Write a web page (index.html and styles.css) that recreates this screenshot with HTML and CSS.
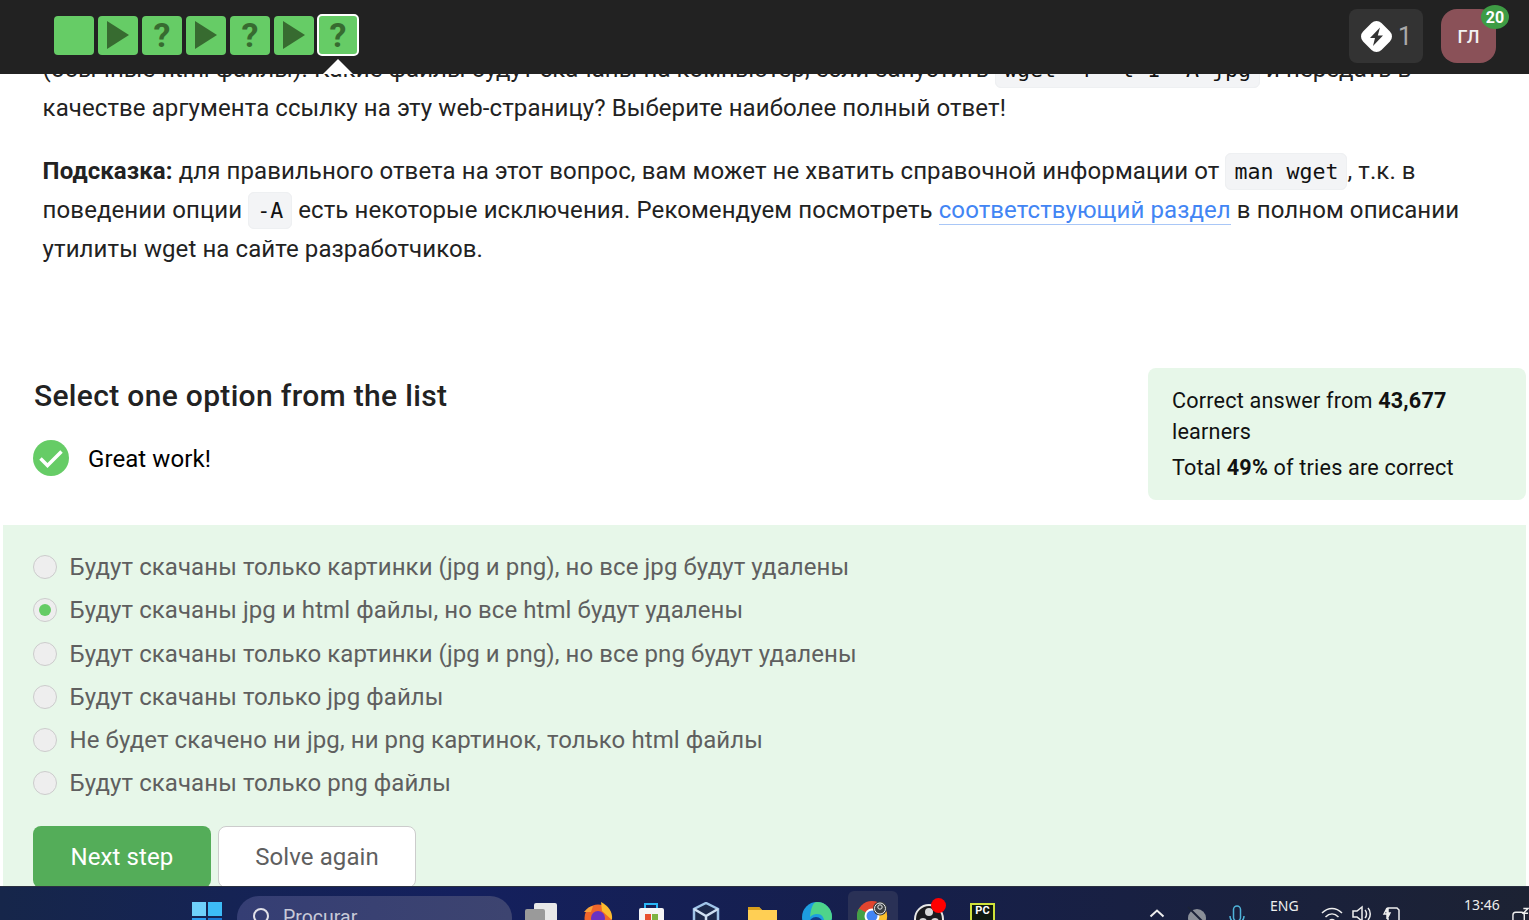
FILE: index.html
```html
<!DOCTYPE html>
<html lang="ru">
<head>
<meta charset="utf-8">
<title>Step</title>
<link rel="stylesheet" href="styles.css">
</head>
<body>
<header class="topbar">
  <nav class="steps">
    <a class="step"></a>
    <a class="step"><svg class="tri" viewBox="0 0 22 28"><path d="M0 0L22 14L0 28Z"/></svg></a>
    <a class="step">?</a>
    <a class="step"><svg class="tri" viewBox="0 0 22 28"><path d="M0 0L22 14L0 28Z"/></svg></a>
    <a class="step">?</a>
    <a class="step"><svg class="tri" viewBox="0 0 22 28"><path d="M0 0L22 14L0 28Z"/></svg></a>
    <a class="step step-current">?</a>
  </nav>
  <div class="top-actions">
    <div class="energy">
      <svg class="bolt" viewBox="0 0 31 31"><rect class="bolt-bg" x="2.500" y="2.500" width="26" height="26" rx="7" transform="rotate(45 15.500 15.500)"/><path class="bolt-in" d="M19 6.500L9 17h5l-2 8L22 14.500h-5.200z"/></svg>
      <span>1</span>
    </div>
    <div class="avatar">ГЛ<span class="badge">20</span></div>
  </div>
</header>

<main class="page">
  <section class="lesson">
    <p class="para">(обычные html файлы). Какие файлы будут скачаны на компьютер, если запустить <code>wget -r -l 1 -A jpg</code> и передать в качестве аргумента ссылку на эту web-страницу? Выберите наиболее полный ответ!</p>
    <p class="para"><strong>Подсказка:</strong> для правильного ответа на этот вопрос, вам может не хватить справочной информации от <code>man wget</code>, т.к. в поведении опции <code>-A</code> есть некоторые исключения. Рекомендуем посмотреть <a class="link">соответствующий раздел</a> в полном описании утилиты wget на сайте разработчиков.</p>
  </section>

  <section class="quiz-head">
    <div class="result">
      <h2 class="quiz-title">Select one option from the list</h2>
      <div class="great">
        <svg class="check" viewBox="0 0 36 36"><circle cx="18" cy="18" r="18"/><path d="M7.500 18.500l7 7L28.500 11.500"/></svg>
        <span class="great-text">Great work!</span>
      </div>
    </div>
    <aside class="stats">
      <p>Correct answer from <b>43,677</b> learners</p>
      <p>Total <b>49%</b> of tries are correct</p>
    </aside>
  </section>

  <section class="answers">
    <ul class="options">
      <li class="option"><span class="radio"></span>Будут скачаны только картинки (jpg и png), но все jpg будут удалены</li>
      <li class="option"><span class="radio radio-on"></span>Будут скачаны jpg и html файлы, но все html будут удалены</li>
      <li class="option"><span class="radio"></span>Будут скачаны только картинки (jpg и png), но все png будут удалены</li>
      <li class="option"><span class="radio"></span>Будут скачаны только jpg файлы</li>
      <li class="option"><span class="radio"></span>Не будет скачено ни jpg, ни png картинок, только html файлы</li>
      <li class="option"><span class="radio"></span>Будут скачаны только png файлы</li>
    </ul>
    <div class="buttons">
      <button class="btn btn-next">Next step</button>
      <button class="btn btn-again">Solve again</button>
    </div>
  </section>
</main>

<footer class="taskbar">
  <svg class="tb-win" viewBox="0 0 30 30"><rect x="0" y="0" width="14" height="14" fill="#6fd0fa"/><rect x="16" y="0" width="14" height="14" fill="#3dbcf7"/><rect x="0" y="16" width="14" height="14" fill="#2a9df0"/><rect x="16" y="16" width="14" height="14" fill="#1976d2"/></svg>
  <div class="tb-search">
    <svg class="tb-glass" viewBox="0 0 20 20"><circle cx="9" cy="9" r="7"/><path d="M14 14l5 5"/></svg>
    <span>Procurar</span>
  </div>
  <svg class="tb-icon tb-tasks" viewBox="0 0 32 32"><rect x="9" y="0" width="23" height="26" rx="2" fill="#e8e8e8"/><rect x="0" y="6" width="20" height="20" rx="2" fill="#9a9a9a"/></svg>
  <svg class="tb-icon tb-fox" viewBox="0 0 32 32"><circle cx="15" cy="16" r="13.500" fill="#f0662b"/><path d="M18 0c7 4 12 9 11 18L19 9z" fill="#fbbb2e"/><path d="M1 10c3-4 6-6 9-6l-2 6z" fill="#f8a23a"/><circle cx="15" cy="16" r="7" fill="#6a33c2"/></svg>
  <svg class="tb-icon tb-store" viewBox="0 0 32 32"><path d="M9 6V1h12v5" fill="none" stroke="#29b6f6" stroke-width="2"/><rect x="3" y="5" width="25" height="24" rx="2" fill="#f5f5f5"/><rect x="9" y="11" width="6" height="6" fill="#e8512f"/><rect x="16" y="11" width="6" height="6" fill="#7cb342"/><rect x="9" y="18" width="6" height="6" fill="#29a7e1"/><rect x="16" y="18" width="6" height="6" fill="#fbbc05"/></svg>
  <svg class="tb-icon tb-box" viewBox="0 0 32 32"><path d="M14 1l12 6v15l-12 7-12-7V7z" fill="#1c2a4d" stroke="#9fc4e8" stroke-width="2.500"/><path d="M2 7l12 7 12-7M14 14v15" fill="none" stroke="#cfe0f2" stroke-width="2.500"/></svg>
  <svg class="tb-icon tb-folder" viewBox="0 0 32 32"><path d="M1 4h11l3 3h15v24H1z" fill="#ffcf54"/><path d="M1 4h11l3 3H1z" fill="#d89f1c"/></svg>
  <svg class="tb-icon tb-edge" viewBox="0 0 32 32"><circle cx="15" cy="15" r="15" fill="#1d9de0"/><path d="M15 0a15 15 0 0 1 15 15c0 3-2 5-6 5-3 0-1-8-9-8-3 0-5 1-7 3C9 6 11 0 15 0z" fill="#4ed48a"/><circle cx="14" cy="22" r="7" fill="#123d8c"/></svg>
  <div class="tb-active">
    <svg class="tb-chrome" viewBox="0 0 32 32"><circle cx="15" cy="15" r="15" fill="#e2452f"/><path d="M15 15L28 7.500A15 15 0 0 1 15 30z" fill="#fbc02d"/><path d="M15 15L15 30A15 15 0 0 1 2 7.500z" fill="#43a047"/><circle cx="15" cy="15" r="7.500" fill="#fff"/><circle cx="15" cy="15" r="5.500" fill="#4285f4"/><circle cx="23" cy="7.500" r="7" fill="#3c4043"/><circle cx="23" cy="6" r="2.200" fill="none" stroke="#e8eaed"/><circle cx="23" cy="7.500" r="5.500" fill="none" stroke="#e8eaed"/></svg>
  </div>
  <div class="tb-obs">
    <svg class="tb-icon" viewBox="0 0 32 32"><circle cx="15" cy="17" r="14" fill="#1b1b1f" stroke="#e6e6e6" stroke-width="2"/><circle cx="15" cy="10" r="4" fill="#d8d8d8"/><circle cx="9" cy="20" r="4" fill="#d8d8d8"/><circle cx="21" cy="20" r="4" fill="#d8d8d8"/></svg>
    <span class="tb-dot"></span>
  </div>
  <div class="tb-pc"><span>PC</span></div>
  <div class="tb-tray">
    <svg class="tb-chev" viewBox="0 0 16 10"><path d="M1.500 8.500L8 2.500l6.500 6"/></svg>
    <svg class="tb-cloud" viewBox="0 0 22 22"><circle cx="11" cy="12" r="9" fill="#8a8f98"/><path d="M2 1l18 18" stroke="#1b2238" stroke-width="2"/></svg>
    <svg class="tb-mic" viewBox="0 0 16 24"><rect x="4.500" y="1" width="7" height="15" rx="3.500"/><path d="M1 11c0 9 14 9 14 0"/></svg>
    <span class="tb-lang">ENG</span>
    <svg class="tb-wifi" viewBox="0 0 22 18"><path d="M1 7c6-6 14-6 20 0M4.500 11c4-4 9-4 13 0M8 15c2-2 4-2 6 0"/></svg>
    <svg class="tb-vol" viewBox="0 0 20 18"><path d="M1 6h4l5-4v14l-5-4H1zM13 5c2 2 2 6 0 8M16 3c3 3 3 9 0 12"/></svg>
    <svg class="tb-batt" viewBox="0 0 20 18"><path d="M6 3h9l2 2v11H6zM2 9l3-6v5h3l-3 6V9z"/></svg>
    <span class="tb-time">13:46</span>
    <svg class="tb-note" viewBox="0 0 18 18"><rect x="1" y="5" width="12" height="13" rx="3"/><path d="M12 1h5l-5 5h5"/></svg>
  </div>
</footer>
</body>
</html>
```
FILE: styles.css
```css
* { box-sizing: border-box; }
html, body { margin: 0; height: 920px; overflow: hidden; }
body { font-family: Roboto, "Noto Sans", sans-serif; background: #fff; color: #222; position: relative; }

.topbar { position: absolute; left: 0; top: 0; width: 100%; height: 74px; background: #222; display: flex; align-items: center; justify-content: space-between; padding: 0 33px 0 54px; z-index: 2; }
.steps { display: flex; gap: 4px; margin-top: -3px; position: relative; }
.step { width: 40px; height: 39px; background: #66cc66; border-radius: 4px; display: flex; align-items: center; justify-content: center; color: #376b30; font-size: 34px; font-weight: 700; }
.tri { width: 22px; height: 28px; fill: #376b30; margin-left: 0; }
.step-current { width: 42px; height: 42px; margin-left: -1px; margin-top: -2px; border: 2px solid #fff; border-radius: 5px; position: relative; }
.step-current::after { content: ""; position: absolute; left: 50%; top: 43px; margin-left: -15px; border-left: 15px solid transparent; border-right: 15px solid transparent; border-bottom: 15px solid #fff; }
.top-actions { display: flex; gap: 18px; margin-top: -2px; }
.energy { width: 74px; height: 54px; background: #333; border-radius: 8px; display: flex; align-items: center; padding-left: 12px; gap: 6px; color: #aaa; font-size: 25px; }
.bolt { width: 31px; height: 31px; flex: none; }
.bolt-bg { fill: #fff; }
.bolt-in { fill: #333; }
.avatar { width: 55px; height: 54px; background: #8a5158; border-radius: 16px; color: #f2f2f2; font-size: 18px; font-weight: 500; display: flex; align-items: center; justify-content: center; position: relative; }
.badge { position: absolute; right: -13px; top: -4px; width: 28px; height: 24px; border-radius: 50%; background: #3e9c44; color: #fff; font-size: 16px; font-weight: 700; display: flex; align-items: center; justify-content: center; }

.page { padding-top: 50px; }
.lesson { padding: 0 65px 0 42.600px; height: 307px; }
.para { margin: 0 0 24px; font-size: 24px; line-height: 39px; color: #222; letter-spacing: .09px; }
code { font-family: "DejaVu Sans Mono", monospace; font-size: 21.600px; letter-spacing: 0; background: #f3f4f6; border: 1px solid #eef0f2; border-radius: 6px; padding: 5px 8px; color: #111; }
.link { color: #4285f4; border-bottom: 1px solid #a9c7f7; }

.quiz-head { display: flex; justify-content: space-between; padding: 0 3px 0 33px; height: 168px; }
.result { padding-top: 11px; }
.quiz-title { margin: 0 0 26px 1px; font-size: 30px; line-height: 36px; font-weight: 500; color: #222; letter-spacing: .32px; padding-top: 10px; }
.great { display: flex; align-items: center; gap: 19px; font-size: 24px; color: #000; letter-spacing: .08px; }
.great-text { padding-top: 2px; }
.check { width: 36px; height: 36px; }
.check circle { fill: #66cc66; }
.check path { fill: none; stroke: #fff; stroke-width: 3.500; }
.stats { width: 378px; height: 132px; margin-top: 11px; background: #e7f7e9; border-radius: 8px; padding: 17px 24px; font-size: 21.600px; line-height: 31px; letter-spacing: .19px; color: #111; }
.stats p { margin: 0 0 5px; }

.answers { margin: 0 3px; background: #e7f7e9; padding: 20.600px 30px 0; height: 400px; }
.options { list-style: none; margin: 0 0 20.900px; padding: 0; }
.option { display: flex; align-items: center; gap: 12.500px; height: 43.250px; font-size: 24px; color: #5f5f5f; letter-spacing: .08px; }
.radio { width: 24px; height: 24px; border-radius: 50%; background: #eee; border: 1px solid #ccc; display: flex; align-items: center; justify-content: center; flex: none; }
.radio-on::before { content: ""; width: 12px; height: 12px; border-radius: 50%; background: #66cc66; }
.buttons { display: flex; gap: 7px; }
.btn { height: 62px; border-radius: 8px; font: 24px Roboto, sans-serif; letter-spacing: .1px; }
.btn-next { width: 178px; background: #54ad59; border: 0; color: #fff; }
.btn-again { width: 198px; background: #fff; border: 1px solid #ccc; color: #5f5f5f; }

.taskbar { position: absolute; left: 0; top: 886px; width: 100%; height: 34px; background: linear-gradient(90deg, #16264a, #14205e 30%, #161f4a 60%, #1c2233); border-top: 1px solid #2a3040; overflow: hidden; z-index: 2; display: flex; align-items: flex-start; padding-left: 192px; }
.tb-win { width: 30px; height: 30px; margin-top: 15px; flex: none; }
.tb-search { width: 275px; height: 44px; margin: 9px 0 0 15px; border-radius: 22px; background: linear-gradient(90deg, #353e74, #3d4470); display: flex; align-items: flex-start; color: #c8cad8; font-size: 19.500px; padding: 10px 0 0 15px; gap: 11px; flex: none; }
.tb-glass { width: 20px; height: 20px; margin-top: 1px; fill: none; stroke: #e0e0e8; stroke-width: 2; flex: none; }
.tb-icon { width: 32px; height: 32px; flex: none; }
.tb-tasks { margin: 16px 0 0 13px; }
.tb-fox { margin: 15px 0 0 26px; }
.tb-store { margin: 16px 0 0 21px; }
.tb-box { margin: 15px 0 0 24px; }
.tb-folder { margin: 16px 0 0 23px; }
.tb-edge { margin: 15px 0 0 23px; }
.tb-active { width: 50px; height: 50px; margin: 4px 0 0 14px; background: #2a3156; border-radius: 6px; padding: 10px 0 0 9px; flex: none; }
.tb-chrome { width: 32px; height: 32px; }
.tb-obs { position: relative; width: 32px; margin: 15px 0 0 16px; flex: none; }
.tb-dot { position: absolute; left: 17px; top: -4px; width: 15px; height: 15px; background: #f00; border-radius: 50%; }
.tb-pc { width: 25px; height: 30px; margin: 16px 0 0 24px; background: #0f1a10; border: 2px solid #cfe23a; color: #fff; font-size: 11px; font-weight: 700; line-height: 12px; text-align: center; flex: none; }

.tb-tray { display: flex; align-items: flex-start; margin-left: auto; height: 33px; flex: none; color: #eee; font-family: "Noto Sans", sans-serif; font-size: 14px; line-height: 20px; }
.tb-chev { width: 16px; height: 10px; margin-top: 21px; fill: none; stroke: #eee; stroke-width: 2; flex: none; }
.tb-cloud { width: 22px; height: 22px; margin: 19px 0 0 21px; flex: none; }
.tb-mic { width: 16px; height: 24px; margin: 18px 0 0 21px; fill: none; stroke: #4fb3d9; stroke-width: 1.500; flex: none; }
.tb-lang { width: 30px; margin: 9px 0 0 25px; flex: none; }
.tb-wifi { width: 22px; height: 18px; margin: 19px 0 0 21px; fill: none; stroke: #eee; stroke-width: 1.500; flex: none; }
.tb-vol { width: 20px; height: 18px; margin: 18px 0 0 9px; fill: none; stroke: #eee; stroke-width: 1.500; flex: none; }
.tb-batt { width: 20px; height: 18px; margin: 18px 0 0 10px; fill: none; stroke: #eee; stroke-width: 1.500; flex: none; }
.tb-time { width: 36px; margin: 8px 0 0 62px; flex: none; }
.tb-note { width: 17px; height: 18px; margin: 20px 0 0 12px; fill: none; stroke: #eee; stroke-width: 1.500; flex: none; }
```
